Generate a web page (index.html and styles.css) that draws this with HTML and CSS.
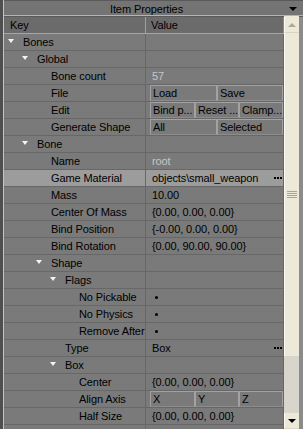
FILE: index.html
```html
<!DOCTYPE html>
<html lang="en">
<head>
    <meta charset="UTF-8">
    <title>Item Properties</title>
    <link rel="stylesheet" href="styles.css">
</head>
<body>
    <div class="panel">
        <div class="title">
            <span class="title-text">Item Properties</span>
            <span class="menu-arrow"></span>
        </div>
        <div class="main">
            <div class="grid">
                <div class="head">
                    <div class="key">Key</div>
                    <div class="val">Value</div>
                </div>

                <div class="row"><div class="key lv0"><span class="tog open"></span>Bones</div><div class="val"></div></div>
                <div class="row"><div class="key lv1"><span class="tog open"></span>Global</div><div class="val"></div></div>
                <div class="row"><div class="key lv2"><span class="tog"></span>Bone count</div><div class="val"><span class="dim">57</span></div></div>
                <div class="row"><div class="key lv2"><span class="tog"></span>File</div><div class="val btns two"><span class="btn">Load</span><span class="btn">Save</span></div></div>
                <div class="row"><div class="key lv2"><span class="tog"></span>Edit</div><div class="val btns three"><span class="btn">Bind p...</span><span class="btn">Reset ...</span><span class="btn">Clamp...</span></div></div>
                <div class="row"><div class="key lv2"><span class="tog"></span>Generate Shape</div><div class="val btns two"><span class="btn">All</span><span class="btn">Selected</span></div></div>
                <div class="row"><div class="key lv1"><span class="tog open"></span>Bone</div><div class="val"></div></div>
                <div class="row"><div class="key lv2"><span class="tog"></span>Name</div><div class="val"><span class="dim">root</span></div></div>
                <div class="row selected"><div class="key lv2"><span class="tog"></span>Game Material</div><div class="val"><span class="text">objects\small_weapon</span><span class="more"><i></i><i></i><i></i></span></div></div>
                <div class="row"><div class="key lv2"><span class="tog"></span>Mass</div><div class="val">10.00</div></div>
                <div class="row"><div class="key lv2"><span class="tog"></span>Center Of Mass</div><div class="val">{0.00, 0.00, 0.00}</div></div>
                <div class="row"><div class="key lv2"><span class="tog"></span>Bind Position</div><div class="val">{-0.00, 0.00, 0.00}</div></div>
                <div class="row"><div class="key lv2"><span class="tog"></span>Bind Rotation</div><div class="val">{0.00, 90.00, 90.00}</div></div>
                <div class="row"><div class="key lv2"><span class="tog open"></span>Shape</div><div class="val"></div></div>
                <div class="row"><div class="key lv3"><span class="tog open"></span>Flags</div><div class="val"></div></div>
                <div class="row"><div class="key lv4"><span class="tog"></span>No Pickable</div><div class="val"><span class="dot"></span></div></div>
                <div class="row"><div class="key lv4"><span class="tog"></span>No Physics</div><div class="val"><span class="dot"></span></div></div>
                <div class="row"><div class="key lv4"><span class="tog"></span>Remove After</div><div class="val"><span class="dot"></span></div></div>
                <div class="row"><div class="key lv3"><span class="tog"></span>Type</div><div class="val"><span class="text">Box</span><span class="more"><i></i><i></i><i></i></span></div></div>
                <div class="row"><div class="key lv3"><span class="tog open"></span>Box</div><div class="val"></div></div>
                <div class="row"><div class="key lv4"><span class="tog"></span>Center</div><div class="val">{0.00, 0.00, 0.00}</div></div>
                <div class="row"><div class="key lv4"><span class="tog"></span>Align Axis</div><div class="val btns three"><span class="btn">X</span><span class="btn">Y</span><span class="btn">Z</span></div></div>
                <div class="row"><div class="key lv4"><span class="tog"></span>Half Size</div><div class="val">{0.00, 0.00, 0.00}</div></div>
                <div class="row"><div class="key lv4"><span class="tog"></span></div><div class="val"></div></div>
            </div>
            <div class="scroll">
                <div class="sb-btn"><span class="arrow-up"></span></div>
                <div class="thumb"><span class="grip"></span></div>
                <div class="track"></div>
                <div class="sb-btn"><span class="arrow-down"></span></div>
            </div>
            <div class="edge"></div>
        </div>
    </div>
</body>
</html>
```

FILE: styles.css
```css
body {
    margin: 0;
    background-color: #4f4f4f;
    font-family: 'Liberation Sans', Arial, sans-serif;
    font-size: 11px;
    letter-spacing: -0.1px;
    color: #000;
}

.panel {
    margin-left: 3px;
    border-left: 1px solid #c4c4c4;
    width: 299px;
    height: 429px;
    overflow: hidden;
    display: flex;
    flex-direction: column;
}

.title {
    display: flex;
    align-items: center;
    height: 14px;
    border-top: 1px solid #5a5a5a;
    border-bottom: 1px solid #b4b4b4;
    background-color: #747474;
    line-height: 14px;
}

.title-text {
    flex: 1;
    text-align: center;
    padding-top: 1px;
}

.menu-arrow {
    width: 0;
    height: 0;
    margin-right: 6px;
    margin-top: 2px;
    border-left: 4px solid transparent;
    border-right: 4px solid transparent;
    border-top: 4px solid #000;
}

.main {
    flex: 1;
    display: flex;
    border-top: 1px solid #5a5a5a;
    min-height: 0;
}

.grid {
    width: 280px;
    flex: none;
    background-color: #7a7a7a;
}

.head,
.row {
    display: grid;
    grid-template-columns: 142px 138px;
    height: 16px;
    line-height: 16px;
}

.head {
    background-color: #6b6b6b;
    border-bottom: 1px solid #a6a6a6;
}

.head .key {
    padding-left: 6px;
    border-right: 1px solid #a0a0a0;
}

.head .val {
    padding-left: 5px;
    border-right: 1px solid #8a8a8a;
}

.row {
    border-bottom: 1px solid #676767;
}

.row.selected {
    background-color: #9c9c9c;
}

.key {
    display: flex;
    border-right: 1px solid #676767;
    white-space: nowrap;
    overflow: hidden;
}

.row .val {
    display: flex;
    padding-left: 6px;
    border-right: 1px solid #676767;
    white-space: nowrap;
    overflow: hidden;
}

.lv0 { padding-left: 4px; }
.lv1 { padding-left: 18px; }
.lv2 { padding-left: 32px; }
.lv3 { padding-left: 46px; }
.lv4 { padding-left: 60px; }

.tog {
    width: 15px;
    flex: none;
}

.tog.open::before {
    content: "";
    display: block;
    width: 0;
    height: 0;
    margin-top: 5px;
    border-left: 3px solid transparent;
    border-right: 3px solid transparent;
    border-top: 4px solid #f4f4f4;
}

.dim {
    color: #c6c6c6;
}

.text {
    flex: 1;
}

.more {
    display: flex;
    gap: 1px;
    align-items: center;
    margin-right: 1px;
}

.more i {
    width: 2px;
    height: 2px;
    background-color: #000;
}

.dot {
    width: 3px;
    height: 3px;
    margin: 7px 0 0 3px;
    border-radius: 50%;
    background-color: #000;
}

.btns {
    display: grid !important;
    padding-left: 4px !important;
}

.btns.two {
    grid-template-columns: 67px 66px;
}

.btns.three {
    grid-template-columns: 45px 44px 44px;
}

.btn {
    border: 1px solid #a2a2a2;
    border-bottom-color: #8c8c8c;
    line-height: 14px;
    padding-left: 2px;
    overflow: hidden;
}

.scroll {
    width: 15px;
    flex: none;
    display: flex;
    flex-direction: column;
    background-color: #ece9d8;
    margin-top: -1px;
    padding-top: 1px;
}

.sb-btn {
    height: 15px;
    flex: none;
    display: flex;
    align-items: center;
    justify-content: center;
    background-color: #ece9d8;
    border-left: 1px solid #fbfaf4;
    border-bottom: 1px solid #d8d5c6;
}

.arrow-up {
    width: 0;
    height: 0;
    border-left: 4px solid transparent;
    border-right: 4px solid transparent;
    border-bottom: 4px solid #acaa9c;
}

.arrow-down {
    width: 0;
    height: 0;
    border-left: 4px solid transparent;
    border-right: 4px solid transparent;
    border-top: 4px solid #000;
}

.thumb {
    height: 323px;
    flex: none;
    display: flex;
    align-items: center;
    justify-content: center;
    border-left: 1px solid #fbfaf4;
    border-bottom: 1px solid #d8d5c6;
}

.grip {
    width: 10px;
    height: 7px;
    background: repeating-linear-gradient(#a9a697 0 1px, transparent 1px 2px);
}

.track {
    flex: 1;
    background-color: #d8d5cc;
}

.edge {
    width: 4px;
    flex: none;
    background-color: #8b8b8b;
}
```
